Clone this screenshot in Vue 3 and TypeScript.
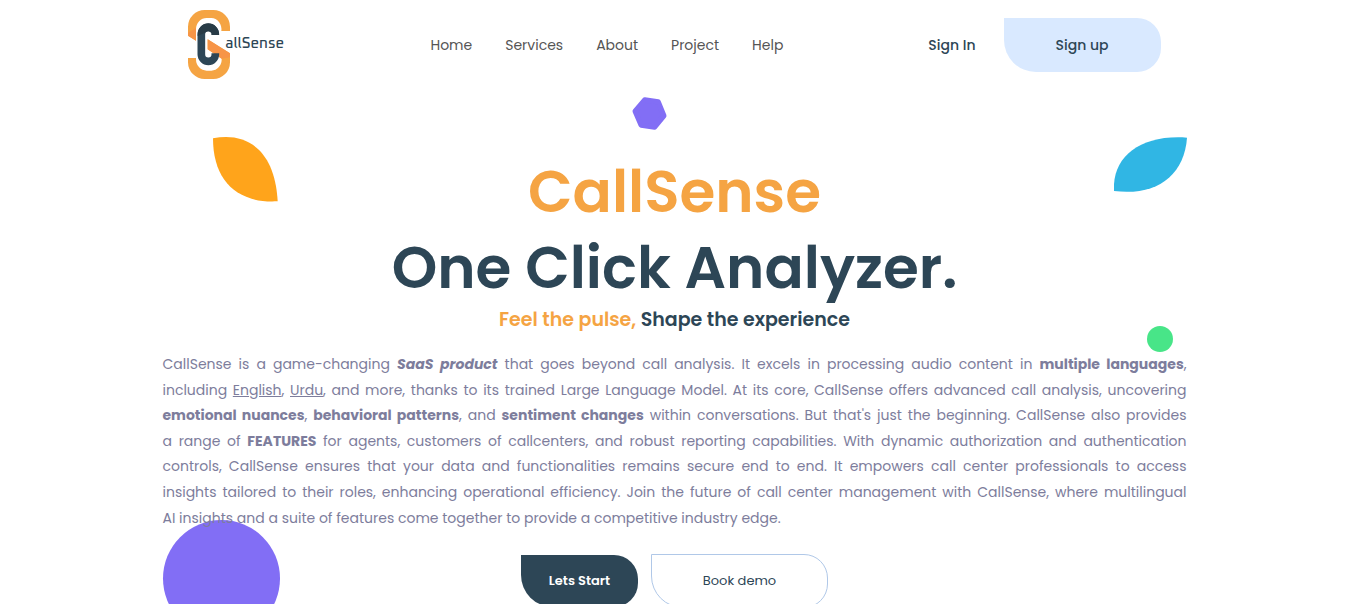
<script setup lang="ts">
interface NavItem {
  label: string
  href: string
}

const navItems: NavItem[] = [
  { label: 'Home', href: '#home' },
  { label: 'Services', href: '#services' },
  { label: 'About', href: '#about' },
  { label: 'Project', href: '#project' },
  { label: 'Help', href: '#help' },
]
</script>

<template>
  <div class="page">
    <header class="header">
      <a class="logo" href="#home" aria-label="CallSense">
        <svg width="98" height="70" viewBox="54 30 294 210">
          <path
            fill="#f5a443"
            d="M180 93V80A50 50 0 0 0 130 30H104A50 50 0 0 0 54 80V107L78 122V88A32 34 0 0 1 110 54H124A30 34 0 0 1 154 93Z"
          />
          <path fill="#f79548" d="M54 98L78 84V122L54 107Z" />
          <path
            fill="#f5a443"
            d="M54 174H78V178A32 34 0 0 0 110 212H124A31 34 0 0 0 155 176L113 148V118L180 160V187A50 50 0 0 1 130 237H104A50 50 0 0 1 54 187Z"
          />
          <path fill="#f79548" d="M113 118L180 160V172L155 176L113 148Z" />
          <path
            fill="none"
            stroke="#2d4656"
            stroke-width="23"
            d="M136 105V103A21 21 0 0 0 94 103V163A21 21 0 0 0 136 163V160"
          />
          <path
            fill="#283b46"
            d="M147 105V103A32 33 0 0 0 83 103V108L105 98Q115 88 125 100V105Z"
          />
          <text class="logo-text" x="166" y="145">allSense</text>
        </svg>
      </a>
      <nav class="nav">
        <a v-for="item in navItems" :key="item.label" :href="item.href">{{ item.label }}</a>
      </nav>
      <div class="account">
        <a class="sign-in" href="#sign-in">Sign In</a>
        <button class="sign-up" type="button">Sign up</button>
      </div>
    </header>

    <main class="hero">
      <svg class="shape hexagon" viewBox="696 230 105 100" aria-hidden="true">
        <path
          fill="#826ef5"
          stroke="#826ef5"
          stroke-width="16"
          stroke-linejoin="round"
          d="M734 239L775 245L792 287L764 321L723 315L705 273Z"
        />
      </svg>
      <svg class="shape leaf-orange" viewBox="69 50 195 195" aria-hidden="true">
        <path fill="#ffa41b" d="M69 54C172 34 255 90 263 243C140 250 69 180 69 54Z" />
      </svg>
      <svg class="shape leaf-blue" viewBox="72 50 219 168" aria-hidden="true">
        <path fill="#30b6e4" d="M291 52C283 165 200 228 72 212C66 110 150 42 291 52Z" />
      </svg>
      <span class="shape dot-green"></span>
      <span class="shape dot-purple"></span>

      <h1><span class="accent">CallSense</span><br />One Click Analyzer.</h1>
      <h2><span class="accent">Feel the pulse,</span> Shape the experience</h2>
      <p class="intro">
        CallSense is a game-changing <b><i>SaaS product</i></b> that goes beyond call analysis. It
        excels in processing audio content in <b>multiple languages</b>,<br />
        including <u>English</u>, <u>Urdu</u>, and more, thanks to its trained Large Language Model.
        At its core, CallSense offers advanced call analysis, uncovering<br />
        <b>emotional nuances</b>, <b>behavioral patterns</b>, and <b>sentiment changes</b> within
        conversations. But that's just the beginning. CallSense also provides<br />
        a range of <b>FEATURES</b> for agents, customers of callcenters, and robust reporting
        capabilities. With dynamic authorization and authentication<br />
        controls, CallSense ensures that your data and functionalities remains secure end to end. It
        empowers call center professionals to access<br />
        insights tailored to their roles, enhancing operational efficiency. Join the future of call
        center management with CallSense, where multilingual
        <span class="closing">
          AI insights and a suite of features come together to provide a competitive industry edge.
        </span>
      </p>
      <div class="actions">
        <button class="start" type="button">Lets Start</button>
        <button class="demo" type="button">Book demo</button>
      </div>
    </main>
  </div>
</template>

<style>
body {
  margin: 0;
  background: #fff;
}
</style>

<style scoped>
.page {
  font-family: Poppins, Inter, 'Open Sans', sans-serif;
  color: #2d4656;
  overflow: hidden;
}

a {
  color: inherit;
  text-decoration: none;
}

button {
  font: inherit;
  color: inherit;
  border: 0;
  padding: 0;
  cursor: pointer;
}

.header {
  box-sizing: border-box;
  max-width: 1024px;
  height: 90px;
  margin: 0 auto;
  padding: 0 26px 0 25px;
  display: flex;
  align-items: center;
  justify-content: space-between;
}

.logo svg {
  display: block;
}

.logo-text {
  font-family: Oxanium, Orbitron, 'DejaVu Sans', sans-serif;
  font-size: 45px;
  font-weight: 500;
  fill: #2d4656;
}

.nav {
  display: flex;
  gap: 33px;
  font-size: 14px;
  line-height: 20px;
  color: #555;
}

.account {
  display: flex;
  align-items: center;
  gap: 28px;
  font-size: 14px;
  line-height: 20px;
  font-weight: 500;
}

.sign-up {
  width: 157px;
  height: 54px;
  background: #d9e9ff;
  border-radius: 0 24px 24px 32px;
}

.hero {
  position: relative;
  max-width: 1024px;
  margin: 0 auto;
  padding: 64px 0 24px;
}

.shape {
  position: absolute;
}

.hexagon {
  left: 469px;
  top: 7px;
  width: 35px;
  height: 33px;
}

.leaf-orange {
  left: 50px;
  top: 47px;
  width: 65px;
  height: 65px;
}

.leaf-blue {
  right: 0;
  top: 47px;
  width: 73px;
  height: 56px;
}

.dot-green {
  right: 14px;
  top: 236px;
  width: 26px;
  height: 26px;
  border-radius: 50%;
  background: #48e588;
}

.dot-purple {
  left: 0;
  top: 430px;
  width: 117px;
  height: 117px;
  border-radius: 50%;
  background: #826ef5;
}

h1,
h2,
.intro {
  position: relative;
  margin: 0;
}

h1 {
  font-size: 58px;
  line-height: 76px;
  font-weight: 600;
  text-align: center;
}

h2 {
  font-size: 19px;
  line-height: 28px;
  font-weight: 600;
  text-align: center;
}

.accent {
  color: #f5a443;
}

.intro {
  margin-top: 18px;
  font-size: 14px;
  line-height: 1.83;
  color: #7d7d9c;
  text-align: justify;
  text-align-last: justify;
}

.closing {
  display: block;
  text-align-last: left;
}

.actions {
  position: relative;
  margin-top: 23px;
  display: flex;
  align-items: center;
  justify-content: center;
  gap: 13px;
  font-size: 13px;
}

.start {
  width: 117px;
  height: 52px;
  background: #2d4656;
  color: #fff;
  font-weight: 600;
  border-radius: 0 24px 24px 32px;
}

.demo {
  box-sizing: border-box;
  width: 177px;
  height: 54px;
  background: #fff;
  border: 1px solid #b0c8e8;
  border-radius: 0 24px 24px 32px;
}
</style>
